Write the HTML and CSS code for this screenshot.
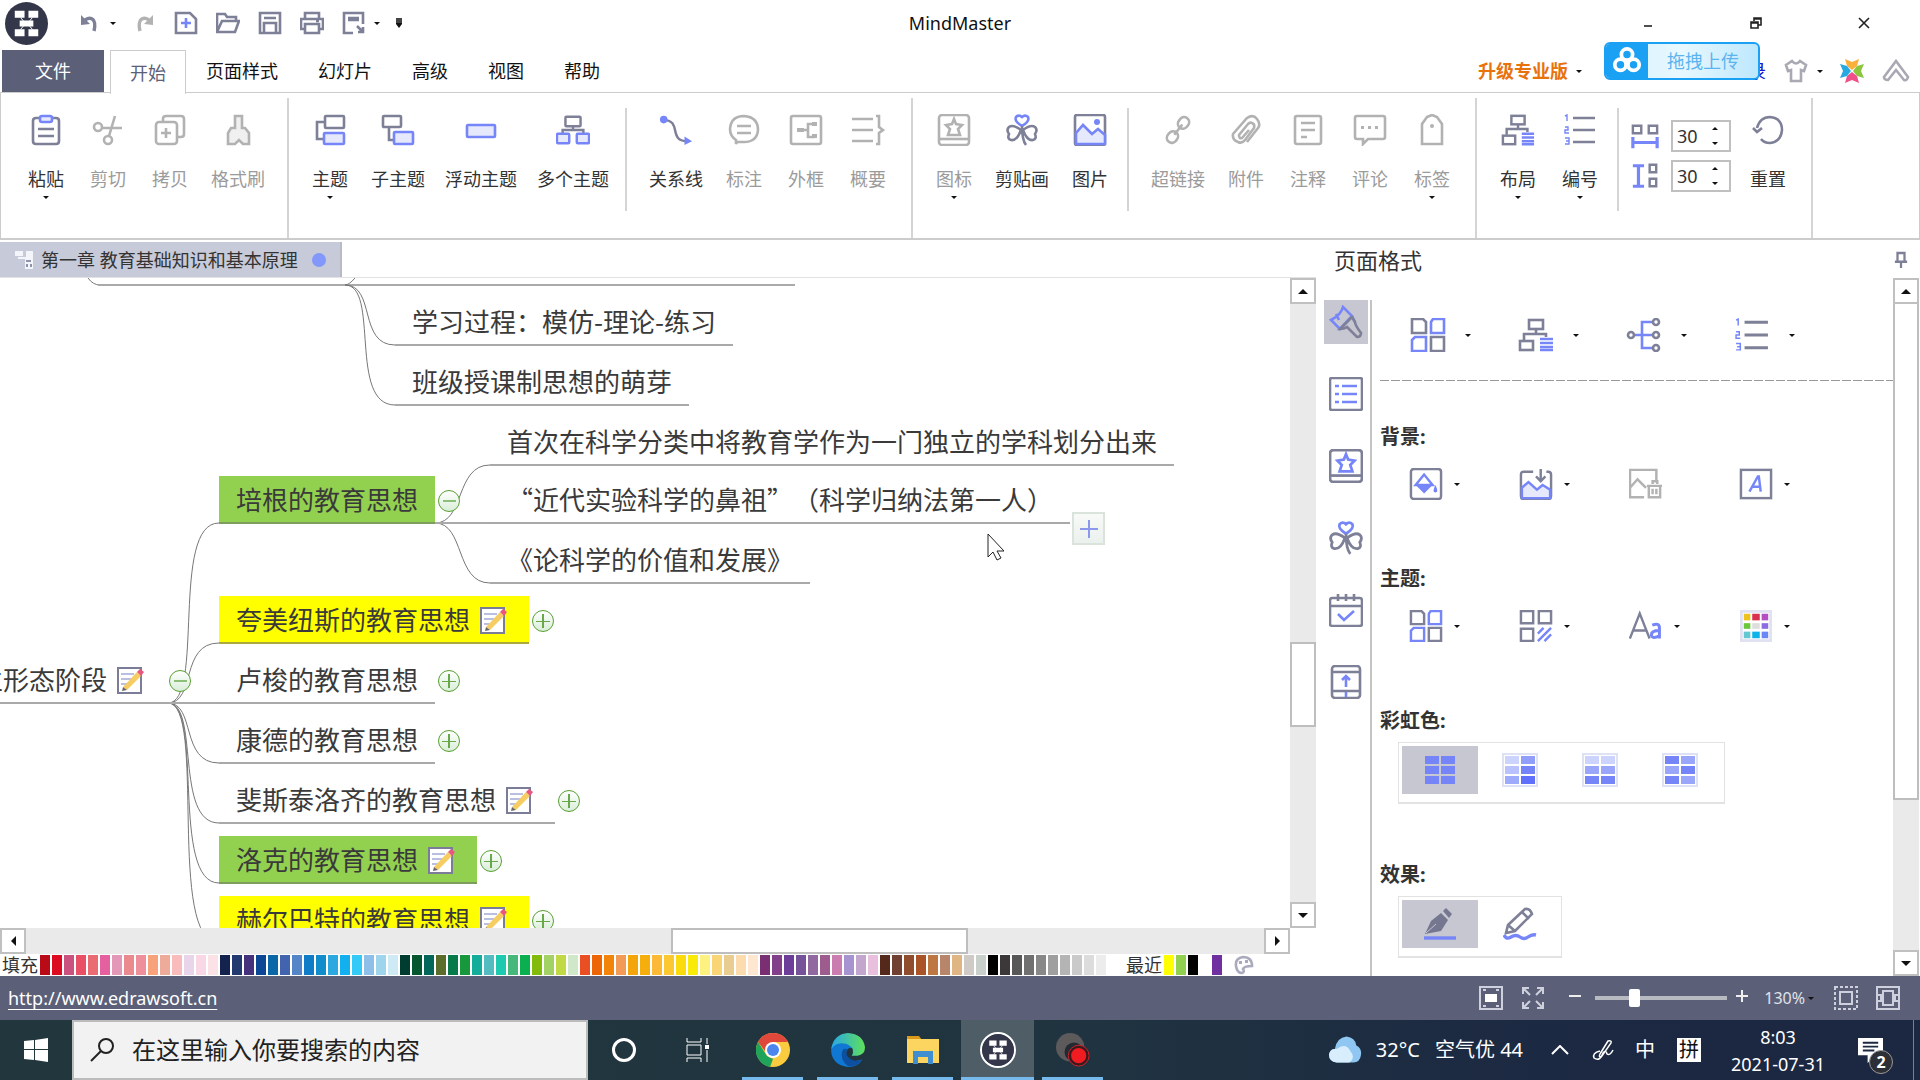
FILE: index.html
```html
<!DOCTYPE html>
<html lang="zh-CN">
<head>
<meta charset="utf-8">
<title>MindMaster</title>
<link rel="stylesheet" href="styles.css">
</head>
<body>
<svg class="sprite" aria-hidden="true">
  <symbol id="logo" viewBox="0 0 44 44"><circle cx="22" cy="22" r="22" fill="#34364a"/><path d="M10 9h10v7H10zM24 9h10v7H24zM15 19h14v6H15zM10 28h10v7H10zM24 28h10v7H24z" fill="#fff"/><path d="M16 16l5 6-5 6M28 16l-5 6 5 6" stroke="#fff" stroke-width="1" fill="none"/></symbol>
  <symbol id="undo" viewBox="0 0 24 24"><path class="l3" d="M7 9c6-4 12-1 9 11"/><path class="f" d="M3 4v10l9-1z"/></symbol>
  <symbol id="redo" viewBox="0 0 24 24"><path class="l3" d="M17 9c-6-4-12-1-9 11"/><path class="f" d="M21 4v10l-9-1z"/></symbol>
  <symbol id="new" viewBox="0 0 24 24"><path class="l" d="M2 2h14l6 6v14H2z"/><path class="a" d="M12 7v10M7 12h10"/></symbol>
  <symbol id="folder" viewBox="0 0 24 24"><path class="l" d="M1 21V3h8l2 3h9v4M1 21L6 10h17l-4 11z"/></symbol>
  <symbol id="save" viewBox="0 0 24 24"><path class="l" d="M2 2h20v20H2zM6 22V12h12v10M6 7h12"/></symbol>
  <symbol id="print" viewBox="0 0 24 24"><path class="l" d="M5 8V2h14v6M5 18H1V8h22v10h-4M5 13h14v9H5zM16 10h3"/></symbol>
  <symbol id="export" viewBox="0 0 24 24"><path class="l" d="M11 22H2V2h19v11M6 7h11M6 9h11M15 15l6 6M21 16v5h-5"/></symbol>
  <symbol id="min" viewBox="0 0 16 16"><path d="M4 11h8" class="k"/></symbol>
  <symbol id="restore" viewBox="0 0 16 16"><path d="M3 7h7v6H3zM3 8h7M6 6V3h7v7h-3M6 4h7" class="k"/></symbol>
  <symbol id="close" viewBox="0 0 16 16"><path d="M3 3l10 10M13 3L3 13" class="k"/></symbol>
  <symbol id="cloudlogo" viewBox="0 0 32 32"><g fill="none" stroke="#fff" stroke-width="4"><circle cx="16" cy="9" r="6"/><circle cx="9" cy="20" r="6"/><circle cx="23" cy="20" r="6"/></g></symbol>
  <symbol id="shirt" viewBox="0 0 24 24"><path class="l" d="M8 2q4 5 8 0l6 4-2 6-3-1v11H7V11l-3 1-2-6z"/></symbol>
  <symbol id="flower" viewBox="0 0 24 24"><path fill="#fbb03b" d="M5 0l7 3 7-3-2 7-5 4-5-4z"/><path fill="#8cc63f" d="M24 5l-3 7 3 7-7-2-4-5 4-5z"/><path fill="#f0508a" d="M5 24l7-3 7 3-2-7-5-4-5 4z"/><path fill="#29a9e1" d="M0 5l3 7-3 7 7-2 4-5-4-5z"/></symbol>
  <symbol id="chev" viewBox="0 0 28 24"><path class="l" d="M2 18L14 2l12 16q-1 4-4 3l-8-10-8 10q-4 0-4-3z"/></symbol>
  <symbol id="paste" viewBox="0 0 32 32"><path class="l" d="M9 4H6q-3 0-3 3v20q0 3 3 3h20q3 0 3-3V7q0-3-3-3h-3M8 15h16M8 22h16"/><rect class="a p" x="10" y="2" width="12" height="6" rx="2"/></symbol>
  <symbol id="cut" viewBox="0 0 32 32"><circle class="l" cx="6" cy="13" r="4"/><circle class="l" cx="16" cy="26" r="4"/><path class="l" d="M10 14h20M17 22L23 2"/></symbol>
  <symbol id="copy" viewBox="0 0 32 32"><path class="l" d="M9 8V5q0-3 3-3h15q3 0 3 3v15q0 3-3 3h-3"/><rect class="l" x="2" y="8" width="21" height="22" rx="3"/><path class="l" d="M12 14v10M7 19h10"/></symbol>
  <symbol id="brush" viewBox="0 0 32 32"><path class="l p" d="M13 14V2h7v12h3l4 5v11h-6l-4-4-4 4H6V19l3-5z"/></symbol>
  <symbol id="topic" viewBox="0 0 32 32"><path class="l" d="M10 8H3v17h6"/><rect class="l" x="11" y="2" width="19" height="12" rx="1"/><rect class="a p" x="10" y="19" width="20" height="11" rx="1"/></symbol>
  <symbol id="sub" viewBox="0 0 32 32"><rect class="l" x="1" y="2" width="18" height="11" rx="1"/><path class="l" d="M7 13v13h5"/><rect class="a p" x="12" y="18" width="19" height="12" rx="1"/></symbol>
  <symbol id="float" viewBox="0 0 32 32"><rect class="a p" x="2" y="11" width="28" height="12" rx="1"/></symbol>
  <symbol id="multi" viewBox="0 0 36 32"><rect class="l" x="10" y="2" width="16" height="10" rx="1"/><path class="l" d="M18 12v4M7 20v-4h22v4"/><rect class="a p" x="1" y="20" width="13" height="10" rx="1"/><rect class="a p" x="22" y="20" width="13" height="10" rx="1"/></symbol>
  <symbol id="relation" viewBox="0 0 36 32"><path class="l" d="M4 5c22 1 4 23 27 23"/><circle class="af" cx="5" cy="5" r="4"/><path class="af" d="M27 23l8 5-8 4z"/></symbol>
  <symbol id="callout" viewBox="0 0 32 32"><path class="l" d="M8 26q-6-4-6-11Q3 2 16 2q14 1 14 14-1 12-14 12H9l-1 2zM9 12h14M9 19h14"/></symbol>
  <symbol id="boundary" viewBox="0 0 32 32"><rect class="l" x="1" y="2" width="30" height="28" rx="2"/><path class="l" d="M13 16h4M25 10h-7v13h7"/><path class="f" d="M7 14h7v4H7zM22 8h5v4h-5zM22 20h5v4h-5z"/></symbol>
  <symbol id="summary" viewBox="0 0 34 32"><path class="l" d="M1 5h21M1 16h21M1 27h21M25 2h3v11l4 3-4 3v11h-3"/></symbol>
  <symbol id="mark" viewBox="0 0 32 32"><rect class="l" x="1" y="1" width="30" height="30" rx="3"/><path class="l" d="M1 25h30"/><path class="a" d="M16 5l2 5 6 1-4 4 2 6h-12l2-6-4-4 6-1z"/></symbol>
  <symbol id="clover" viewBox="0 0 32 32"><path class="a" d="M16 12Q8 7 10 3q3-3 6 0 3-3 6 0 2 4-6 9z"/><path class="l" d="M15 16Q7 10 3 13q-3 3 0 7-2 5 2 6 6 1 10-10zM17 16q8-6 12-3 3 3 0 7 2 5-2 6-6 1-10-10zM16 12q0 14 4 19"/></symbol>
  <symbol id="image" viewBox="0 0 32 32"><rect class="l" x="1" y="1" width="30" height="30" rx="2"/><path class="a p" d="M2 19l7-8 9 9 6-5 7 6v9H2z"/><circle class="af" cx="23" cy="8" r="3"/></symbol>
  <symbol id="link" viewBox="0 0 32 32"><g class="l" transform="rotate(-52 16 16)"><rect x="1" y="11" width="12" height="10" rx="5"/><rect x="19" y="11" width="12" height="10" rx="5"/><path d="M10 16h13"/></g></symbol>
  <symbol id="clip" viewBox="0 0 32 32"><path class="l" d="M8 28q-6-2-5-8L17 4q6-4 10 1t1 9L17 28M8 28q4 2 7-2l9-12q1-4-2-5-2-1-4 1l-9 11q0 4 3 3l7-8"/></symbol>
  <symbol id="note" viewBox="0 0 32 32"><rect class="l" x="3" y="2" width="26" height="28" rx="2"/><path class="l" d="M9 9h14M9 16h14M9 23h6"/></symbol>
  <symbol id="comment" viewBox="0 0 32 32"><path class="l" d="M3 2h26q2 0 2 2v19q0 2-2 2H14l-5 5v-5H3q-2 0-2-2V4q0-2 2-2z"/><path class="f" d="M7 12h3v3H7zM14 12h3v3h-3zM21 12h3v3h-3z"/></symbol>
  <symbol id="tag" viewBox="0 0 32 32"><path class="l" d="M11 3l5-2 5 2 5 7v20H6V10z"/><circle class="f" cx="16" cy="12" r="2"/></symbol>
  <symbol id="layout" viewBox="0 0 36 32"><rect class="l" x="11" y="1" width="14" height="9"/><path class="l" d="M18 10v5M6 21v-6h22v3"/><rect class="l" x="2" y="22" width="13" height="9"/><path class="a" d="M22 20h13M22 24h13M22 28h13M22 31h13"/></symbol>
  <symbol id="number" viewBox="0 0 32 32"><path class="l" d="M9 4h22M9 16h22M9 28h22"/><path class="a t" d="M1 2l2-1v6M1 13h3v3H1v3h4M1 24h4v6H1M2 27h3"/></symbol>
  <symbol id="hspace" viewBox="0 0 30 26"><path class="l" d="M2 2h9v8H2zM19 2h9v8h-9z"/><path class="a l3" d="M2 14v12M28 14v12M2 20h26"/></symbol>
  <symbol id="vspace" viewBox="0 0 30 26"><path class="l" d="M20 1h7v8h-7zM20 16h7v8h-7z"/><path class="a l3" d="M2 2h12M2 24h12M8 2v22"/></symbol>
  <symbol id="reset" viewBox="0 0 32 32"><path class="l" d="M5 14Q8 3 18 3q12 1 12 13-1 12-12 13-6 0-9-4"/><path class="l" d="M1 14l4 4 5-4"/></symbol>
  <symbol id="pin" viewBox="0 0 16 20"><path class="l" d="M4 2h8v10H4zM1 12h14M8 12v7"/></symbol>
  <symbol id="paint" viewBox="0 0 34 34"><path class="a" d="M2 15Q12 10 14 2l9 9L11 24zM7 9l3 6M23 11l3 6"/><path class="l" d="M23 12l3 5q0 3 6 11 0 4-4 4L18 22q-3 2-7 2z"/></symbol>
  <symbol id="list" viewBox="0 0 34 34"><rect class="l" x="1" y="1" width="32" height="32" rx="2"/><path class="a" d="M6 9h4M6 17h4M6 25h4M13 9h15M13 17h15M13 25h15"/></symbol>
  <symbol id="task" viewBox="0 0 34 34"><path class="l" d="M3 5h28q2 0 2 3v23q0 2-3 2H4q-3 0-3-2V8q0-3 2-3zM1 13h32M9 1v7M17 1v7M25 1v7"/><path class="a" d="M9 21l6 6 10-9"/></symbol>
  <symbol id="slide" viewBox="0 0 34 34"><rect class="l" x="3" y="1" width="28" height="32" rx="3"/><path class="l" d="M3 7h28M3 26h28"/><path class="a" d="M17 22V13M13 15l4-4 4 4M17 27v5"/></symbol>
  <symbol id="four" viewBox="0 0 34 34"><path class="l" d="M1 1h11l3 3v11H1zM20 19h13v14H20z"/><path class="a" d="M22 1h11v14H20V4zM1 22l3-3h11v14H1z"/></symbol>
  <symbol id="fourh" viewBox="0 0 34 34"><path class="l" d="M1 1h13v13H1zM20 1h13v13H20zM1 20h13v13H1z"/><path class="a" d="M19 25l6-6M19 33l14-14M26 33l7-7"/></symbol>
  <symbol id="connect" viewBox="0 0 34 34"><path class="a" d="M8 17h18M26 4H15v26h11"/><g class="l w"><circle cx="4" cy="17" r="3"/><circle cx="29" cy="4" r="3"/><circle cx="29" cy="17" r="3"/><circle cx="29" cy="30" r="3"/></g></symbol>
  <symbol id="fill" viewBox="0 0 34 34"><rect class="l" x="1" y="1" width="32" height="32" rx="3"/><path class="a" d="M15 7l-9 11h18z"/><path class="af" d="M6 18h18l-9 9zM27 18q4 8 0 8t0-8z"/></symbol>
  <symbol id="bgimg" viewBox="0 0 34 34"><path class="l" d="M14 4H4q-3 0-3 3v23q0 3 3 3h26q3 0 3-3V7q0-3-3-3h-2M22 1v11M17 9l5 5 5-5"/><path class="a p" d="M2 21l7-6 9 8 6-5 8 5v9H2z"/></symbol>
  <symbol id="bgdel" viewBox="0 0 36 34"><path class="l" d="M16 31H1V2h28v12M1 21l8-9 9 9M19 19h16M21 19v12h12V19M25 17v-3h5v3M25 22v6M29 22v6"/></symbol>
  <symbol id="water" viewBox="0 0 34 34"><rect class="l" x="1" y="2" width="32" height="30"/><path class="a" d="M10 25L19 9h1l2 16M13 20h8"/></symbol>
  <symbol id="font" viewBox="0 0 38 34"><path class="l" d="M1 31L12 3l11 28M5 22h14"/><path class="a l3" d="M26 16q8-3 8 3v12M34 22q-9 0-9 5 1 5 9 1"/></symbol>
  <symbol id="colors" viewBox="0 0 34 34"><path fill="#e0e2f2" d="M0 0h34v34H0z"/><path fill="#fff" d="M3 3h28v28H3z"/><path fill="#eec21c" d="M4 4h7v7H4z"/><path fill="#d9304f" d="M13 4h8v7h-8z"/><path fill="#b34fc0" d="M23 4h7v7h-7z"/><path fill="#6bc83c" d="M4 14h7v6H4z"/><path fill="#ddd" d="M13 14h8v6h-8z"/><path fill="#8a6ee0" d="M23 14h7v6h-7z"/><path fill="#63c8d0" d="M4 23h7v7H4z"/><path fill="#0db4ea" d="M13 23h8v7h-8z"/><path fill="#6c86f5" d="M23 23h7v7h-7z"/></symbol>
  <symbol id="pen" viewBox="0 0 34 34"><path d="M2 27L8 14l10-8 7 7-7 11z" fill="#74778f"/><path d="M20 4l3-3 6 6-3 4z" fill="#74778f"/><path d="M3 26l10-9" stroke="#c6c7d1"/><path class="a l3" d="M1 31h32"/></symbol>
  <symbol id="pencil" viewBox="0 0 34 34"><path class="l" d="M3 26l2-8L22 2q5-1 7 5L12 24zM19 5l7 7M5 18l7 6"/><path class="a l3" d="M1 28q2 5 7 2t9 0 8 0 8-2"/></symbol>
  <symbol id="memo" viewBox="0 0 27 27"><path fill="#fff" stroke="#7b7d98" stroke-width="2" d="M1 1h23v25H1z"/><path stroke="#b9bfe0" stroke-width="2" d="M4 7h13M4 12h11M4 17h7"/><path fill="#f6cd62" d="M6 20L20 5l4 4L10 23z"/><path fill="#e8577e" d="M20 5l3-3 4 3-3 4z"/><path fill="#666" d="M5 24l1-4 4 3z"/></symbol>
  <symbol id="palette" viewBox="0 0 20 20"><path class="l" d="M18 11q0-9-9-9Q1 3 2 11q1 7 6 7 3-1 1-4 1-3 9-3z"/><path class="f" d="M5 6h3v3H5zM11 5h3v3h-3z"/></symbol>
  <symbol id="fitpage" viewBox="0 0 24 24"><path class="s" d="M1 1h22v22H1zM4 4h3M17 4h3M4 20h3M17 20h3"/><path fill="#fff" d="M6 8h12v8H6z"/></symbol>
  <symbol id="full" viewBox="0 0 24 24"><path class="s" d="M2 8V2h6M16 2h6v6M22 16v6h-6M8 22H2v-6M2 2l7 7M22 2l-7 7M22 22l-7-7M2 22l7-7"/></symbol>
  <symbol id="fitsel" viewBox="0 0 24 24"><path class="s" stroke-dasharray="3 2" d="M1 1h22v22H1z"/><path class="s" d="M6 6h12v12H6z"/></symbol>
  <symbol id="fitwin" viewBox="0 0 24 24"><path class="s" d="M1 1h22v22H1zM7 5h10v14H7zM1 9h4v6H1M23 9h-4v6h4"/></symbol>
  <symbol id="win" viewBox="0 0 24 24"><path fill="#fff" d="M0 3l10-1v9H0zM11 2l13-2v11H11zM0 12h10v10L0 21zM11 12h13v12l-13-2z"/></symbol>
  <symbol id="search" viewBox="0 0 24 24"><circle cx="16" cy="8" r="7" fill="none" stroke="#222" stroke-width="2"/><path d="M11 13L1 23" stroke="#222" stroke-width="2"/></symbol>
  <symbol id="taskview" viewBox="0 0 24 24"><path fill="none" stroke="#fff" stroke-width="1" d="M1 0v4h14V0M1 24v-4h14v4M1 7h14v10H1zM21 0v6M21 12v12"/><path fill="#fff" d="M19 7h4v4h-4z"/></symbol>
  <symbol id="chrome" viewBox="0 0 34 34"><circle cx="17" cy="17" r="17" fill="#fbcb3f"/><path fill="#e0483b" d="M2 9a17 17 0 0 1 30 0H17l-8 9z"/><path fill="#20a45a" d="M2 9l9 14 6 3-3 8A17 17 0 0 1 2 9z"/><circle cx="17" cy="17" r="8" fill="#fff"/><circle cx="17" cy="17" r="6" fill="#4a86ee"/></symbol>
  <symbol id="edge" viewBox="0 0 36 36"><defs><linearGradient id="eg"><stop stop-color="#27a7e8"/><stop offset="1" stop-color="#5fe05a"/></linearGradient></defs><path fill="url(#eg)" d="M0 17Q3 1 18 0q16 1 18 15 0 8-8 9h-6q2-3 1-7-6-8-23 0z"/><path fill="#1078d2" d="M0 18q4-8 13-7 6 0 9 5-5-1-6 5 0 8 9 9l8-2q-4 8-15 8Q1 34 0 18z"/><path fill="#0d4fa0" d="M12 19q-3 9 6 16 11 1 15-7-10 4-16-4-2-3 0-7-4-1-5 2z"/></symbol>
  <symbol id="explorer" viewBox="0 0 34 28"><path fill="#dc9a1b" d="M1 0h12l3 4H1z"/><path fill="#fbd560" d="M1 3h32v24H1z"/><path fill="#3f8fd0" d="M7 28V15h20v13h-5v-7H12v7z"/></symbol>
  <symbol id="rec" viewBox="0 0 36 36"><circle cx="15" cy="15" r="15" fill="#5d5a5c"/><circle cx="19" cy="20" r="10" fill="#222b31"/><circle cx="24" cy="24" r="11" fill="#3b1a1e" stroke="#d3222b" stroke-width="1"/><circle cx="24" cy="24" r="8" fill="#f01c22"/></symbol>
  <symbol id="cloud" viewBox="0 0 34 28"><path fill="#8fc7f2" d="M8 27q-8-1-8-8 1-6 6-6 2-12 12-13 9 1 10 9 6 3 5 10-1 8-8 8z"/><path fill="#d8eefc" d="M8 27q-8-1-8-8 1-7 8-6 9-7 14 2 6 7-1 12z"/></symbol>
  <symbol id="up" viewBox="0 0 18 10"><path fill="none" stroke="#fff" stroke-width="2" d="M1 9l8-8 8 8"/></symbol>
  <symbol id="ink" viewBox="0 0 22 22"><path fill="none" stroke="#fff" stroke-width="1.5" d="M8 15L16 2q4-1 3 2l-9 13q-4 2-2-2zM8 12q-8 2-6 7 6 4 9-5 3-4 4 1 3 2 6-4"/></symbol>
  <symbol id="notify" viewBox="0 0 26 26"><path fill="#fff" d="M0 0h26v18h-8l-8 8v-8H0z"/><path stroke="#1d2940" stroke-width="2" d="M5 5h16M5 9h16M5 13h12"/></symbol>
</svg>

<header class="titlebar">
  <div class="quick">
    <svg class="logo"><use href="#logo"/></svg>
    <button class="q" aria-label="撤销"><svg><use href="#undo"/></svg></button>
    <i class="caret"></i>
    <button class="q off" aria-label="重做"><svg><use href="#redo"/></svg></button>
    <button class="q" aria-label="新建"><svg><use href="#new"/></svg></button>
    <button class="q" aria-label="打开"><svg><use href="#folder"/></svg></button>
    <button class="q" aria-label="保存"><svg><use href="#save"/></svg></button>
    <button class="q" aria-label="打印"><svg><use href="#print"/></svg></button>
    <button class="q" aria-label="导出"><svg><use href="#export"/></svg></button>
    <i class="caret"></i>
    <i class="more"></i>
  </div>
  <h1 class="title">MindMaster</h1>
  <div class="winctl">
    <button aria-label="最小化"><svg><use href="#min"/></svg></button>
    <button aria-label="还原"><svg><use href="#restore"/></svg></button>
    <button aria-label="关闭"><svg><use href="#close"/></svg></button>
  </div>
</header>

<nav class="menu">
  <button class="file">文件</button>
  <button class="tab current">开始</button>
  <button class="tab">页面样式</button>
  <button class="tab">幻灯片</button>
  <button class="tab">高级</button>
  <button class="tab">视图</button>
  <button class="tab">帮助</button>
  <div class="account">
    <a class="upgrade" href="#">升级专业版</a><i class="caret"></i>
    <a class="login" href="#">登录</a>
    <button class="q light" aria-label="主题皮肤"><svg><use href="#shirt"/></svg></button><i class="caret"></i>
    <button class="q flower" aria-label="社区"><svg><use href="#flower"/></svg></button>
    <button class="q light wide" aria-label="折叠功能区"><svg><use href="#chev"/></svg></button>
  </div>
</nav>
<button class="upload"><span class="upload-mark"><svg><use href="#cloudlogo"/></svg></span><span class="upload-text">拖拽上传</span></button>

<section class="ribbon">
  <div class="group wide-start">
    <button class="cmd"><svg><use href="#paste"/></svg>粘贴<i class="caret"></i></button>
    <button class="cmd off"><svg><use href="#cut"/></svg>剪切</button>
    <button class="cmd off"><svg><use href="#copy"/></svg>拷贝</button>
    <button class="cmd off"><svg><use href="#brush"/></svg>格式刷</button>
  </div>
  <div class="group to-short">
    <button class="cmd"><svg><use href="#topic"/></svg>主题<i class="caret"></i></button>
    <button class="cmd"><svg><use href="#sub"/></svg>子主题</button>
    <button class="cmd"><svg><use href="#float"/></svg>浮动主题</button>
    <button class="cmd"><svg><use href="#multi"/></svg>多个主题</button>
  </div>
  <div class="group">
    <button class="cmd"><svg><use href="#relation"/></svg>关系线</button>
    <button class="cmd off"><svg><use href="#callout"/></svg>标注</button>
    <button class="cmd off"><svg><use href="#boundary"/></svg>外框</button>
    <button class="cmd off"><svg><use href="#summary"/></svg>概要</button>
  </div>
  <div class="group to-short">
    <button class="cmd off"><svg><use href="#mark"/></svg>图标<i class="caret"></i></button>
    <button class="cmd"><svg><use href="#clover"/></svg>剪贴画</button>
    <button class="cmd"><svg><use href="#image"/></svg>图片</button>
  </div>
  <div class="group">
    <button class="cmd off"><svg><use href="#link"/></svg>超链接</button>
    <button class="cmd off"><svg><use href="#clip"/></svg>附件</button>
    <button class="cmd off"><svg><use href="#note"/></svg>注释</button>
    <button class="cmd off"><svg><use href="#comment"/></svg>评论</button>
    <button class="cmd off"><svg><use href="#tag"/></svg>标签<i class="caret"></i></button>
  </div>
  <div class="group to-short">
    <button class="cmd"><svg><use href="#layout"/></svg>布局<i class="caret"></i></button>
    <button class="cmd"><svg><use href="#number"/></svg>编号<i class="caret"></i></button>
  </div>
  <div class="group spacing">
    <div class="spins">
      <label class="spin"><svg><use href="#hspace"/></svg><span class="spinbox"><input type="number" value="30" aria-label="水平间距"><span class="steps"><i class="caret rise"></i><i class="caret"></i></span></span></label>
      <label class="spin"><svg><use href="#vspace"/></svg><span class="spinbox"><input type="number" value="30" aria-label="垂直间距"><span class="steps"><i class="caret rise"></i><i class="caret"></i></span></span></label>
    </div>
    <button class="cmd"><svg><use href="#reset"/></svg>重置</button>
  </div>
</section>

<main class="work">
  <section class="editor">
    <div class="doctabs"><button class="doctab"><svg viewBox="0 0 20 20"><path fill="#f4f5fb" d="M1 1h8v5H1zM12 1h7v18h-8V9H4V7h8z"/><path fill="#8f93ab" d="M2 7l6 6M12 10h5v2h-5zM12 14h2v3h-2zM16 14h2v3h-2z"/></svg>第一章 教育基础知识和基本原理<i class="dot"></i></button></div>
    <div class="stage">
      <div class="canvas">
        <svg class="wires"><path d="M88 0q5 7 12 7"/><path class="bar" d="M98 7h697"/><path d="M345 7q4 0 10-7M345 7C376 7 358 67 395 67M345 7C380 7 348 127 395 127M435 245C465 245 455 187 490 187M435 245C465 245 455 305 490 305M168 425C205 425 170 245 219 245M168 425C196 425 180 365 219 365M168 425C196 425 180 485 219 485M168 425C200 425 174 545 219 545M168 425C204 425 170 605 219 605M168 425C207 425 166 665 219 665"/><path class="bar" d="M435 245h56M160 425h60"/></svg>
        <div class="node n-learn">学习过程：模仿-理论-练习</div>
        <div class="node n-class">班级授课制思想的萌芽</div>
        <div class="node n-first">首次在科学分类中将教育学作为一门独立的学科划分出来</div>
        <div class="node n-modern">“近代实验科学的鼻祖”（科学归纳法第一人）</div>
        <div class="node n-book">《论科学的价值和发展》</div>
        <div class="node green n-bacon">培根的教育思想<button class="fold less" aria-label="收起"></button></div>
        <div class="node yellow memo n-comenius">夸美纽斯的教育思想<svg><use href="#memo"/></svg><button class="fold" aria-label="展开"></button></div>
        <div class="node n-rousseau">卢梭的教育思想<button class="fold" aria-label="展开"></button></div>
        <div class="node n-kant">康德的教育思想<button class="fold" aria-label="展开"></button></div>
        <div class="node memo n-pesta">斐斯泰洛齐的教育思想<svg><use href="#memo"/></svg><button class="fold" aria-label="展开"></button></div>
        <div class="node green memo n-locke">洛克的教育思想<svg><use href="#memo"/></svg><button class="fold" aria-label="展开"></button></div>
        <div class="node yellow memo n-herbart">赫尔巴特的教育思想<svg><use href="#memo"/></svg><button class="fold" aria-label="展开"></button></div>
        <div class="node memo n-stage">独立形态阶段<svg><use href="#memo"/></svg><button class="fold less" aria-label="收起"></button></div>
        <button class="add" aria-label="添加主题"></button>
        <svg class="cursor" viewBox="0 0 20 30"><path fill="#fff" stroke="#222" d="M1 1v23l5-5 4 8 4-2-4-7h7z"/></svg>
      </div>
      <div class="vscroll"><button aria-label="向上"><i class="caret rise big"></i></button><i class="thumb canvas-thumb"></i><button aria-label="向下"><i class="caret big"></i></button></div>
    </div>
    <div class="hscroll"><button aria-label="向左"><i class="tri left"></i></button><i class="thumb"></i><button aria-label="向右"><i class="tri right"></i></button></div>
    <div class="palette"><span>填充</span><div class="swatches" id="fills"></div><span class="recent">最近</span><div class="swatches" id="recents"></div><button class="q" aria-label="更多颜色"><svg><use href="#palette"/></svg></button></div>
  </section>

  <aside class="panel">
    <div class="panel-head"><h2>页面格式</h2><button aria-label="固定"><svg><use href="#pin"/></svg></button></div>
    <div class="panel-body">
      <div class="rail">
        <button class="on" aria-label="页面格式"><svg><use href="#paint"/></svg></button>
        <button aria-label="大纲"><svg><use href="#list"/></svg></button>
        <button aria-label="图标"><svg><use href="#mark"/></svg></button>
        <button aria-label="剪贴画"><svg><use href="#clover"/></svg></button>
        <button aria-label="任务"><svg><use href="#task"/></svg></button>
        <button aria-label="幻灯片"><svg><use href="#slide"/></svg></button>
      </div>
      <div class="props">
        <div class="tools top">
          <button aria-label="布局样式"><svg><use href="#four"/></svg><i class="caret"></i></button>
          <button aria-label="布局"><svg><use href="#layout"/></svg><i class="caret"></i></button>
          <button aria-label="连接样式"><svg><use href="#connect"/></svg><i class="caret"></i></button>
          <button aria-label="编号"><svg><use href="#number"/></svg><i class="caret"></i></button>
        </div>
        <h3>背景:</h3>
        <div class="tools">
          <button aria-label="背景颜色"><svg><use href="#fill"/></svg><i class="caret"></i></button>
          <button aria-label="背景图片"><svg><use href="#bgimg"/></svg><i class="caret"></i></button>
          <button class="off" aria-label="移除背景"><svg><use href="#bgdel"/></svg></button>
          <button aria-label="水印"><svg><use href="#water"/></svg><i class="caret"></i></button>
        </div>
        <h3>主题:</h3>
        <div class="tools">
          <button aria-label="主题样式"><svg><use href="#four"/></svg><i class="caret"></i></button>
          <button aria-label="主题效果"><svg><use href="#fourh"/></svg><i class="caret"></i></button>
          <button aria-label="主题字体"><svg><use href="#font"/></svg><i class="caret"></i></button>
          <button aria-label="主题颜色"><svg><use href="#colors"/></svg><i class="caret"></i></button>
        </div>
        <h3>彩虹色:</h3>
        <div class="choice">
          <button class="on r1" aria-label="单色"><b></b><b></b><b></b><b></b><b></b><b></b></button>
          <button class="r2" aria-label="彩虹一"><b></b><b></b><b></b><b></b><b></b><b></b></button>
          <button class="r3" aria-label="彩虹二"><b></b><b></b><b></b><b></b><b></b><b></b></button>
          <button class="r4" aria-label="彩虹三"><b></b><b></b><b></b><b></b><b></b><b></b></button>
        </div>
        <h3 class="later">效果:</h3>
        <div class="choice">
          <button class="on" aria-label="常规"><svg><use href="#pen"/></svg></button>
          <button aria-label="手绘"><svg><use href="#pencil"/></svg></button>
        </div>
      </div>
      <div class="vscroll"><button aria-label="向上"><i class="caret rise big"></i></button><i class="thumb panel-thumb"></i><button aria-label="向下"><i class="caret big"></i></button></div>
    </div>
  </aside>
</main>

<footer class="status">
  <a href="#">http://www.edrawsoft.cn</a>
  <div class="zoom">
    <button aria-label="适应页面"><svg><use href="#fitpage"/></svg></button>
    <button aria-label="全屏"><svg><use href="#full"/></svg></button>
    <button class="sign" aria-label="缩小"></button>
    <input type="range" min="0" max="100" value="28" aria-label="缩放">
    <button class="sign plus" aria-label="放大"></button>
    <button class="pct">130%<i class="caret"></i></button>
    <button aria-label="适应选区"><svg><use href="#fitsel"/></svg></button>
    <button aria-label="适应窗口"><svg><use href="#fitwin"/></svg></button>
  </div>
</footer>

<div class="taskbar">
  <button class="start" aria-label="开始菜单"><svg><use href="#win"/></svg></button>
  <label class="searchbox"><svg><use href="#search"/></svg><input type="text" placeholder="在这里输入你要搜索的内容" aria-label="搜索"></label>
  <button class="app" aria-label="Cortana"><i class="ring"></i></button>
  <button class="app" aria-label="任务视图"><svg class="small"><use href="#taskview"/></svg></button>
  <button class="app run" aria-label="Chrome"><svg><use href="#chrome"/></svg></button>
  <button class="app run" aria-label="Edge"><svg><use href="#edge"/></svg></button>
  <button class="app run" aria-label="文件资源管理器"><svg><use href="#explorer"/></svg></button>
  <button class="app run focus" aria-label="MindMaster"><svg class="ringed"><use href="#logo"/></svg></button>
  <button class="app run" aria-label="录屏"><svg><use href="#rec"/></svg></button>
  <div class="tray">
    <svg class="weather"><use href="#cloud"/></svg><span class="temp">32°C</span><span class="air">空气优 44</span>
    <svg class="upico"><use href="#up"/></svg><svg class="ink"><use href="#ink"/></svg>
    <span class="zh">中</span><span class="pin">拼</span>
    <div class="clock"><span>8:03</span><span>2021-07-31</span></div>
    <div class="notify"><svg><use href="#notify"/></svg><b>2</b></div>
  </div>
</div>
<script src="script.js"></script>
</body>
</html>
```
FILE: styles.css
```css
* { box-sizing: border-box; }
:root {
  --line: #7e8098;
  --accent: #7686f8;
  --pale: #e6e8fc;
  --edge: #cccccc;
  --slate: #5b6078;
}
body {
  margin: 0;
  height: 100vh;
  display: flex;
  flex-direction: column;
  overflow: hidden;
  position: relative;
  background: #fff;
  color: #333;
  font: 18px/24px "Noto Sans", "Noto Sans CJK SC", sans-serif;
}
button, input { font: inherit; color: inherit; }
button { border: 0; padding: 0; background: none; }
h1, h2, h3 { margin: 0; }
svg { display: block; flex: none; }
.sprite { position: absolute; width: 0; height: 0; }

/* icon strokes */
.l, .a { fill: none; stroke: var(--line); stroke-width: 2.6; }
.a { stroke: var(--accent); }
.l3 { fill: none; stroke-width: 3.4; }
.l3:not(.a) { stroke: var(--line); }
.t { stroke-width: 1.4; }
.p { fill: var(--pale); }
.w { fill: #fff; }
.f { fill: var(--line); }
.af { fill: var(--accent); }
.k { fill: none; stroke: #222; stroke-width: 1.6; }
.s { fill: none; stroke: #ced1dd; stroke-width: 2; }
.off { --line: #b2b2b2; --accent: #b2b2b2; --pale: #f0f0f0; color: #9b9b9b; }
.light { --line: #a9a9b4; }

.caret {
  flex: none;
  width: 6px;
  height: 3px;
  border: 3px solid transparent;
  border-top-color: #111;
  border-bottom: 0;
}
.caret.rise { border: 3px solid transparent; border-bottom-color: #111; border-top: 0; }
.caret.big { width: 10px; height: 5px; border-width: 5px; border-bottom-width: 0; }
.caret.rise.big { border-width: 5px; border-top-width: 0; }

/* title bar */
.titlebar { flex: none; height: 50px; display: grid; grid-template-columns: 1fr auto 1fr; align-items: center; padding-bottom: 4px; }
.quick { display: flex; align-items: center; padding-left: 5px; }
.logo { width: 43px; height: 43px; margin-right: 30px; }
.q svg { width: 24px; height: 24px; }
.quick .q { width: 24px; margin-right: 18px; }
.quick .q:has(+ .caret) { margin-right: 8px; }
.quick .caret { margin-right: 16px; }
.more { width: 6px; height: 10px; background: linear-gradient(#444 0 5px, #111 5px); clip-path: polygon(0 0, 100% 0, 100% 60%, 50% 100%, 0 60%); }
.title { font-size: 18px; font-weight: 400; color: #111; }
.winctl { display: flex; justify-content: flex-end; gap: 92px; padding-right: 48px; }
.winctl svg { width: 16px; height: 16px; }

/* menu */
.menu { flex: none; height: 42px; display: flex; padding-left: 2px; color: #111; }
.file { padding: 0 33px; background: var(--slate); color: #fff; margin-right: 6px; }
.tab { padding: 0 20px; }
.tab.current { padding: 0 19px; border: 1px solid var(--edge); border-bottom: 0; color: var(--slate); background: #fff; margin-bottom: -2px; z-index: 1; }
.account { margin-left: auto; display: flex; align-items: center; padding-right: 9px; }
.account a { text-decoration: none; }
.upgrade { color: #e8720c; font-weight: 700; margin-right: 8px; }
.login { color: #1414c8; margin: 0 18px 0 148px; }
.account .light { margin-right: 9px; }
.account .flower { margin: 0 17px; }
.account .wide { margin-right: 0; }
.account .wide svg { width: 30px; }
.upload { position: absolute; top: 42px; right: 160px; width: 156px; height: 38px; display: flex; border: 2px solid #1ba1f3; border-radius: 6px; overflow: hidden; background: linear-gradient(90deg, #d3f0fe, #e8f8ff 50%, #bde7fd); z-index: 2; }
.upload-mark { width: 42px; height: 100%; background: #1ba1f3; display: grid; place-items: center; }
.upload-mark svg { width: 30px; height: 30px; }
.upload-text { flex: 1; line-height: 34px; color: #5cb4ee; }

/* ribbon */
.ribbon { flex: none; height: 148px; display: flex; border: 1px solid var(--edge); border-bottom-width: 2px; padding-top: 5px; }
.group { position: relative; display: flex; padding: 16px 12px 0; border-right: 2px solid #d4d4d4; }
.group.wide-start { padding-left: 14px; }
.group.to-short { padding: 16px 6px 0 10px; border-right: 0; }
.group.to-short::after { content: ""; align-self: flex-start; width: 2px; height: 103px; margin: -6px -8px 0 6px; background: #d4d4d4; }
.group.to-short + .group { padding-left: 14px; }
.cmd { min-width: 62px; padding: 0 10px; display: flex; flex-direction: column; align-items: center; justify-content: flex-start; white-space: nowrap; }
.cmd svg { width: 34px; height: 32px; margin-bottom: 21px; }
.cmd .caret { margin-top: 5px; }
.spins { display: flex; flex-direction: column; gap: 8px; padding-top: 6px; margin-right: 6px; }
.spin { display: flex; align-items: center; gap: 12px; }
.spin svg { width: 28px; height: 26px; }
.spinbox { display: flex; align-items: center; width: 60px; height: 32px; border: 2px solid #c0c0c0; }
.spinbox input { width: 34px; border: 0; padding: 0 0 0 4px; outline: 0; appearance: textfield; background: none; }
.spinbox input::-webkit-inner-spin-button { display: none; }
.steps { display: flex; flex-direction: column; gap: 12px; padding-left: 5px; }

/* work area */
.work { flex: 1; min-height: 0; display: flex; padding-top: 2px; }
.editor { flex: 1; min-width: 0; display: flex; flex-direction: column; }
.doctabs { flex: none; height: 36px; border-bottom: 1px solid #e2e2e2; }
.doctab { height: 35px; padding: 0 14px; display: flex; align-items: center; background: #c7cad8; border-right: 2px solid #b8bac4; white-space: nowrap; }
.doctab svg { width: 20px; height: 20px; margin-right: 7px; }
.dot { width: 14px; height: 14px; border-radius: 50%; background: #8497fa; margin-left: 14px; }
.stage { flex: 1; min-height: 0; display: flex; }
.canvas { flex: 1; position: relative; overflow: hidden; font: 26px/38px "Noto Sans CJK SC", sans-serif; text-spacing-trim: space-all; color: #3a3a3a; }
.wires { position: absolute; left: 0; top: 0; width: 100%; height: 100%; fill: none; stroke: #777; }
.wires .bar { stroke: #aaa; stroke-width: 2; }
.node { position: absolute; height: 48px; padding: 0 17px; display: flex; align-items: center; white-space: nowrap; border-bottom: 2px solid #a9a9a9; }
.node.memo { padding-right: 22px; }
.node svg { width: 27px; height: 27px; margin: 2px 0 0 10px; }
.green { background: #92d050; border-color: #7f9c5f; }
.yellow { background: #ff0; border-color: #a9a93c; }
.fold, .add { position: absolute; }
.fold { left: calc(100% + 3px); top: 14px; width: 22px; height: 22px; border: 1px solid #58a032; border-radius: 50%; background: linear-gradient(#68a84a, #68a84a) center / 14px 1px no-repeat, linear-gradient(#68a84a, #68a84a) center / 2px 14px no-repeat, linear-gradient(#fff, #d9eed8); }
.fold.less { background: linear-gradient(#8cbf78, #8cbf78) center / 13px 2px no-repeat, linear-gradient(#fff, #d9eed8); }
.n-learn { left: 395px; top: 20px; }
.n-class { left: 395px; top: 80px; }
.n-first { left: 490px; top: 140px; }
.n-modern { left: 490px; top: 198px; }
.n-book { left: 490px; top: 258px; }
.n-bacon { left: 219px; top: 198px; }
.n-comenius { left: 219px; top: 318px; }
.n-rousseau { left: 219px; top: 378px; }
.n-kant { left: 219px; top: 438px; }
.n-pesta { left: 219px; top: 498px; }
.n-locke { left: 219px; top: 558px; }
.n-herbart { left: 219px; top: 618px; }
.n-stage { left: -66px; top: 378px; }
.add { left: 1072px; top: 234px; width: 33px; height: 33px; border: 2px solid #dbe3dd; background: linear-gradient(#8c98ec, #8c98ec) center / 18px 2px no-repeat, linear-gradient(#8c98ec, #8c98ec) center / 2px 18px no-repeat, linear-gradient(#f8faf8, #eaf1ec); }
.cursor { position: absolute; left: 987px; top: 255px; width: 20px; height: 30px; }

/* scroll bars */
.vscroll { flex: none; width: 26px; background: #eaeaea; display: flex; flex-direction: column; }
.vscroll button, .hscroll button { flex: none; width: 26px; height: 26px; display: grid; place-items: center; background: #fff; border: 2px solid #c0c0c0; }
.vscroll button:last-child { margin-top: auto; }
.thumb { background: #fff; border: 2px solid #bebebe; }
.canvas-thumb { height: 13%; margin-top: 338px; }
.panel-thumb { height: 71%; border-width: 0 2px 2px; }
.hscroll { flex: none; height: 26px; display: flex; background: #eaeaea; margin-right: 26px; }
.hscroll .thumb { width: 23%; margin-left: 50%; }
.hscroll button:last-child { margin-left: auto; }
.tri { border: 5px solid transparent; }
.tri.left { border-right-color: #111; border-left: 0; }
.tri.right { border-left-color: #111; border-right: 0; }

.palette { flex: none; height: 22px; display: flex; align-items: center; line-height: 22px; padding-left: 2px; }
.swatches { display: flex; gap: 2px; margin-left: 2px; }
.swatches i { width: 10px; height: 20px; }
.recent { margin-left: 20px; }
.palette .q { margin-left: 12px; --line: #a9abbd; }
.palette .q svg { width: 20px; height: 20px; }

/* format panel */
.panel { flex: none; width: 604px; display: flex; flex-direction: column; padding: 0 1px 0 8px; }
.panel-head { flex: none; height: 36px; display: flex; align-items: center; justify-content: space-between; padding: 0 11px 0 10px; }
.panel-head h2 { font-size: 22px; font-weight: 400; line-height: 30px; }
.panel-head svg { width: 14px; height: 18px; }
.panel-body { flex: 1; min-height: 0; display: flex; }
.rail { flex: none; width: 48px; margin-top: 22px; border-right: 2px solid #c4c4c4; display: flex; flex-direction: column; gap: 28px; }
.rail button { width: 44px; height: 44px; display: grid; place-items: center; }
.rail svg { width: 34px; height: 34px; }
.on { background: #c6c7d1; }
.props { flex: 1; padding: 22px 0 0 8px; overflow: hidden; }
.tools { display: flex; height: 64px; margin-bottom: 48px; }
.tools button { width: 110px; padding-left: 29px; display: flex; align-items: center; gap: 11px; }
.tools svg { width: 34px; height: 32px; }
.tools.top { height: 81px; padding-bottom: 11px; margin-bottom: 41px; background: repeating-linear-gradient(90deg, #999 0 9px, transparent 9px 11px) bottom / 100% 1px no-repeat; }
.tools.top button { width: 108px; padding-left: 30px; gap: 19px; }
.tools.top svg { width: 36px; height: 34px; }
.props h3 { font-size: 20px; line-height: 30px; }
.choice { width: fit-content; height: 62px; margin: 6px 0 0 18px; padding: 3px; display: flex; gap: 4px; border: 1px solid #e2e2e2; border-bottom-width: 2px; }
.choice button { width: 76px; height: 48px; display: grid; place-content: center; }
.choice svg { width: 34px; height: 34px; }
.choice button:has(b) { grid-template-columns: 14px 14px; grid-auto-rows: 8px; gap: 2px; background: linear-gradient(#fff, #fff) center / 32px 30px no-repeat, linear-gradient(#dfe1f4, #dfe1f4) center / 36px 34px no-repeat; }
.choice button.on:has(b) { background: #c6c7d1; }
.choice b { background: #7585f8; }
.choice:has(b) { padding-right: 6px; }
.r2 b:nth-child(1) { background: #ccd3fd; }
.r2 b:nth-child(3) { background: #b9c2fc; }
.r2 b:nth-child(5) { background: #9dabfa; }
.r2 b:nth-child(2) { background: #929ffa; }
.r2 b:nth-child(6) { background: #6070fa; }
.r3 b:nth-child(-n+2) { background: #ccd3fd; }
.r3 b:nth-child(3), .r3 b:nth-child(4) { background: #9aa6fa; }
.r4 b:nth-child(2), .r4 b:nth-child(3), .r4 b:nth-child(6) { background: #9aa6fa; }
.later { margin-top: 56px; }

/* status bar */
.status { flex: none; height: 44px; display: flex; align-items: center; justify-content: space-between; background: var(--slate); color: #fff; padding: 0 20px 0 8px; }
.status a { color: #fff; text-underline-offset: 4px; }
.zoom { display: flex; align-items: center; }
.zoom svg { width: 24px; height: 24px; margin-right: 18px; }
.zoom button:last-child svg { margin-right: 0; }
.sign { width: 12px; height: 12px; margin: 0 14px 4px 6px; background: linear-gradient(#eee, #eee) center / 12px 2px no-repeat; }
.sign.plus { margin: 0 16px 4px 9px; background: linear-gradient(#eee, #eee) center / 12px 2px no-repeat, linear-gradient(#eee, #eee) center / 2px 12px no-repeat; }
.zoom input { appearance: none; width: 132px; height: 4px; margin: 0; background: #b8bac2; }
.zoom input::-webkit-slider-thumb { appearance: none; width: 11px; height: 18px; background: #fff; border-radius: 2px; }
.pct { display: flex; align-items: center; gap: 3px; font-size: 16px; color: #e0e2ea; margin-right: 20px; }

/* taskbar */
.taskbar { flex: none; height: 60px; display: flex; background: linear-gradient(90deg, #22373d, #203440 55%, #1c2942 80%, #1c2741); color: #fff; }
.start { width: 72px; display: grid; place-items: center; }
.start svg { width: 24px; height: 24px; }
.searchbox { width: 516px; display: flex; align-items: center; gap: 18px; padding-left: 16px; background: #f2f2f2; border: 2px solid #bcbcbc; }
.searchbox svg { width: 24px; height: 24px; }
.searchbox input { flex: 1; min-width: 0; padding: 0; border: 0; background: none; outline: 0; font-size: 24px; line-height: 36px; }
.searchbox input::placeholder { color: #222; opacity: 1; }
.app { width: 73px; margin-right: 2px; display: grid; place-items: center; background-repeat: no-repeat; background-position: bottom; background-size: 61px 3px; }
.app:not(.run) { width: 72px; }
.app svg { width: 34px; height: 34px; }
.app .small { width: 24px; height: 24px; }
.ring { width: 24px; height: 24px; border: 3px solid #fff; border-radius: 50%; }
.run { background-image: linear-gradient(#76b9ed, #76b9ed); }
.focus { background-color: #4f5e66; background-size: 100% 3px; }
.app .ringed { border: 2px solid #fff; border-radius: 50%; width: 36px; height: 36px; }
.tray { margin-left: auto; display: flex; align-items: center; font-size: 20px; white-space: nowrap; border-right: 1px solid #77808f; margin-right: 6px; }
.weather { width: 33px; height: 28px; margin-right: 14px; }
.temp { margin-right: 15px; }
.upico { width: 18px; height: 10px; margin: 0 23px 0 28px; }
.ink { width: 22px; height: 22px; margin-right: 21px; }
.zh { margin-right: 22px; }
.pin { width: 24px; height: 24px; background: #fff; color: #111; text-align: center; margin-right: 30px; }
.clock { display: flex; flex-direction: column; align-items: center; gap: 3px; font-size: 18px; margin-right: 33px; }
.notify { position: relative; margin-right: 30px; }
.notify svg { width: 25px; height: 25px; }
.notify b { position: absolute; left: 11px; top: 12px; width: 24px; height: 24px; border: 1px solid #999; border-radius: 50%; background: #2c2f36; font-size: 16px; line-height: 22px; text-align: center; }
```
FILE: script.js
```js
// Fill colours in palette order: reds, blues, greens, oranges, purples, browns, greys
const fills = (
  "b90a18 dc0b22 c9527e e94f65 ea6c72 e5609e e498b8 ea8a8e ee8f9b f8a27b eeab99 f8bcbc e8d5ea f9d7e4 fbe2e7 " +
  "14234e 233a70 45317c 0c4795 0b68a8 4263ae 5585c9 107cc8 128dcc 2aa8df 12b0ee 34caf7 8ebfe8 9ed5ec cdeaf5 " +
  "003d30 05572f 02665b 5a6d2b 087a4a 17983d 13ad9a 53bcc0 1dcab0 46b87c 0caf50 83bb0d a2d165 c1d944 d0e8c9 " +
  "e94f22 ec6608 f18409 f29b56 f3a50a f6ae0c fbb936 fbc831 fcdb0c f9ea08 fdf180 f9d575 e8cc90 fcdcae fde7d0 " +
  "7a2f72 83408a 6c3e99 765299 9168a0 9d5b8e cc7db0 a793cf c2a6cd e8c0de " +
  "55281c 723f33 8f4d2d aa5327 bf7742 b7866a dfb584 cfcac5 c9cfca " +
  "000000 3c3739 585858 707070 888888 9f9f9f b4b4b4 cacaca dcdcdc ececec"
).split(" ");
const recents = "ffff00 92d050 000000 ffffff 7030a0".split(" ");

function paint(id, colors) {
  const box = document.getElementById(id);
  for (const c of colors) {
    const chip = document.createElement("i");
    chip.style.background = "#" + c;
    box.append(chip);
  }
}
paint("fills", fills);
paint("recents", recents);
```
